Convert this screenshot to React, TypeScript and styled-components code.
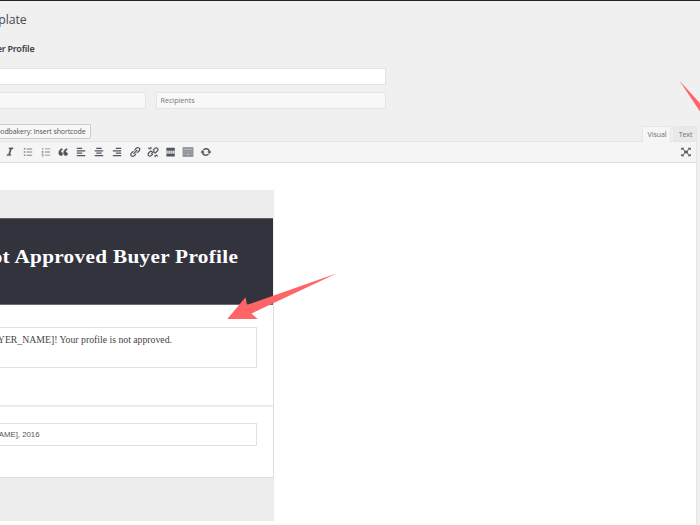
import React from "react";
import styled, { createGlobalStyle } from "styled-components";

const GlobalStyle = createGlobalStyle`
  * { box-sizing: border-box; }
  body { margin: 0; background: #f0f0f0; overflow: hidden; }
`;

const Page = styled.main`
  position: relative;
  width: 700px;
  height: 525px;
  overflow: hidden;
  background: #f0f0f0;
  font-family: "Open Sans", "Noto Sans", sans-serif;
  color: #444;
`;
const AdminBar = styled.div`
  height: 1px;
  background: #23222d;
`;
/* Right-anchored line whose start runs off the left edge. */
const Line = styled.div<{ $end: number }>`
  display: flex;
  justify-content: flex-end;
  align-items: center;
  width: ${(p) => p.$end}px;
  white-space: nowrap;
`;
const Title = styled(Line)`
  height: 37px;
  font: 400 12.3px "Open Sans", sans-serif;
  letter-spacing: -0.12px;
  color: #4a4b50;
`;
const Subtitle = styled(Line)`
  height: 30px;
  padding-bottom: 9px;
  font: 600 9px "Noto Sans", "Open Sans", sans-serif;
  letter-spacing: -0.22px;
  color: #3f3f45;
`;
const Fields = styled.div`
  display: grid;
  grid-template-columns: 146px 230px;
  grid-auto-rows: 17px;
  align-content: start;
  column-gap: 10px;
  row-gap: 7px;
  height: 56px;
`;
const Field = styled.div<{ $wide?: boolean }>`
  grid-column: ${(p) => (p.$wide ? "1 / -1" : "auto")};
  height: 17px;
  border: 1px solid ${(p) => (p.$wide ? "#e2e2e2" : "#e5e5e5")};
  border-left-width: ${(p) => (p.$wide ? 0 : 1)}px;
  background: ${(p) => (p.$wide ? "#fff" : "#f8f8f8")};
  padding-left: 3.5px;
  font-size: 7.2px;
  line-height: 15px;
  letter-spacing: -0.02px;
  color: #777;
  &:nth-child(2) { border-left: 0; }
`;
const Tools = styled.div`
  display: flex;
  justify-content: space-between;
  height: 18px;
  padding-right: 3px;
`;
const ShortcodeButton = styled(Line)`
  height: 15px;
  padding: 0 4px 1px 0;
  border: 1px solid #ccc;
  border-left: 0;
  border-radius: 0 2px 2px 0;
  background: #f7f7f7;
  font-size: 7.1px;
  letter-spacing: -0.15px;
  color: #555;
`;
const Tabs = styled.div`
  display: flex;
  gap: 2px;
  padding-top: 2px;
  height: 18px;
`;
const Tab = styled.div<{ $active?: boolean }>`
  width: ${(p) => (p.$active ? 29 : 24)}px;
  height: ${(p) => (p.$active ? 16 : 15)}px;
  padding-left: 1px;
  border: 1px solid #e6e6e6;
  border-bottom: 0;
  background: ${(p) => (p.$active ? "#f6f6f6" : "#e9e9e9")};
  text-align: center;
  font-size: 7.1px;
  line-height: 14px;
  letter-spacing: -0.12px;
  color: #707070;
`;
const Editor = styled.section`
  width: 697px;
  height: 384px;
  border-right: 1px solid #e5e5e5;
  background: #fff;
`;
const Toolbar = styled.div`
  display: flex;
  align-items: center;
  justify-content: space-between;
  height: 22px;
  margin-top: -1px;
  padding: 0 4px;
  border-top: 1px solid #e5e5e5;
  border-bottom: 1px solid #dedede;
  background: #f5f5f5;
`;
const IconGroup = styled.div`
  display: flex;
  gap: 5.84px;
`;
const Icon = styled.svg`
  display: block;
  width: 12px;
  height: 12px;
  fill: #50565f;
`;
const Email = styled.article`
  width: 274px;
  height: 331px;
  margin-top: 27px;
  padding-top: 28px;
  background: #ededed;
`;
const Banner = styled.header`
  width: 273px;
  height: 87px;
  padding-top: 26px;
  border-top: 1px solid #5d5f66;
  border-bottom: 1px solid #6b6a73;
  background: #33333e;
`;
const BannerText = styled(Line)`
  height: 24px;
  font: 700 19.2px "Liberation Serif", serif;
  letter-spacing: 0.29px;
  transform: scaleX(1.105);
  transform-origin: right center;
  color: #fff;
`;
const Card = styled.div`
  height: 173px;
  border-right: 1px solid #dedede;
  border-bottom: 1px solid #dedede;
  background: #fff;
`;
const CardPart = styled.div<{ $foot?: boolean }>`
  height: ${(p) => (p.$foot ? 71 : 102)}px;
  padding-top: ${(p) => (p.$foot ? 16 : 22)}px;
  border-bottom: ${(p) => (p.$foot ? 0 : 2)}px solid #ececec;
`;
const TextBox = styled.div<{ $foot?: boolean }>`
  width: 257px;
  height: ${(p) => (p.$foot ? 23 : 41)}px;
  padding-top: ${(p) => (p.$foot ? 3 : 4)}px;
  border: solid #e1e1e1;
  border-width: 1px 1px 1px 0;
`;
const Message = styled(Line)`
  height: 15px;
  font: 9.4px "Liberation Serif", serif;
  letter-spacing: 0px;
  transform: scaleX(1.04);
  transform-origin: right center;
  color: #444;
`;
const Copyright = styled(Line)`
  height: 15px;
  font: 7.8px "Liberation Sans", sans-serif;
  color: #555;
`;
const Arrows = styled.svg`
  position: absolute;
  inset: 0;
  fill: #ff6467;
  pointer-events: none;
`;

const icons: React.ReactNode[] = [
  <path d="M14.78 5h-2.13l-2.8 9h2.12l-.62 2H4.6l.62-2h2.14l2.8-9H8.03l.62-2h6.75z" stroke="#50565f" strokeWidth=".5" />,
  <path fill="#80858b" d="M3 3.5h2.5V6H3zM7.5 4h9.5v1.7H7.5zM3 8.7h2.5v2.5H3zM7.5 9.2h9.5v1.7H7.5zM3 14h2.5v2.5H3zM7.5 14.5h9.5v1.7H7.5z" />,
  <path fill="#80858b" d="M4 2.8h1.2v4H4zM3 8.5h2.5v1.3L4.2 11h1.5v1H3v-1.2l1.3-1.2H3zM3 13.5h2.6v4H3v-.8h1.6V16H3.4v-.8h1.2v-.8H3zM8 4h9v1.6H8zM8 9.2h9v1.6H8zM8 14.4h9v1.6H8z" />,
  <path d="M9.49 13.22c0-.74-.2-1.38-.61-1.9-.62-.78-1.83-.88-2.53-.72-.29-1.65 1.11-3.75 2.92-4.65L7.88 4c-2.73 1.3-5.42 4.28-4.96 8.05C3.21 14.43 4.59 16 6.54 16c.85 0 1.56-.25 2.12-.75s.83-1.18.83-2.03zm8.05 0c0-.74-.2-1.38-.61-1.9-.63-.78-1.83-.88-2.53-.72-.29-1.65 1.11-3.75 2.92-4.65L15.93 4c-2.73 1.3-5.41 4.28-4.95 8.05.29 2.38 1.66 3.95 3.61 3.95.85 0 1.56-.25 2.12-.75s.83-1.18.83-2.03z" stroke="#50565f" strokeWidth=".8" />,
  <path d="M3 3h9v2H3zM3 7h14v2H3zM3 11h9v2H3zM3 15h14v2H3z" />,
  <path d="M5.5 3h9v2h-9zM3 7h14v2H3zM5.5 11h9v2h-9zM3 15h14v2H3z" />,
  <path d="M8 3h9v2H8zM3 7h14v2H3zM8 11h9v2H8zM3 15h14v2H3z" />,
  <path d="M17.74 2.76c1.68 1.69 1.68 4.41 0 6.1l-1.53 1.52c-1.12 1.12-2.7 1.47-4.14 1.09l2.62-2.61.76-.77.76-.76c.84-.84.84-2.2 0-3.04-.84-.85-2.2-.85-3.04 0l-.77.76-3.38 3.38c-.37-1.44-.02-3.02 1.1-4.14l1.52-1.53c1.69-1.68 4.42-1.68 6.1 0zM8.59 13.43l5.34-5.34c.42-.42.42-1.1 0-1.52-.44-.43-1.13-.39-1.53 0l-5.33 5.34c-.42.42-.42 1.1 0 1.52.44.43 1.13.39 1.52 0zm-.76 2.29l4.14-4.15c.38 1.44.03 3.02-1.09 4.14l-1.52 1.53c-1.69 1.68-4.41 1.68-6.1 0-1.68-1.68-1.68-4.42 0-6.1l1.53-1.52c1.12-1.12 2.7-1.47 4.14-1.1l-4.14 4.15c-.85.84-.85 2.2 0 3.05.84.84 2.2.84 3.04 0z" />,
  <g fill="none" stroke="#50565f" strokeWidth="2">
    <path d="M10 7l3-3a3 3 0 0 1 4.3 4.3L14 11.5l-3-.3M10 13l-3 3a3 3 0 0 1-4.3-4.3L6 8.5l3 .3" />
    <path d="M2 3l3.5 2.5M6 1.5l1 3M18 17l-3.5-2.5M14 18.5l-1-3M7 13l5.5-5.5" />
  </g>,
  <path transform="translate(1 0)" d="M3 3h14v5H3zM3 9.3h2v1.7H3zM6 9.3h2v1.7H6zM9 9.3h2v1.7H9zM12 9.3h2v1.7h-2zM15 9.3h2v1.7h-2zM3 12.3h14v5H3z" />,
  <>
    <path d="M1 2h18v16H1z" fill="#868b91" />
    <path
      d="M2.5 5.5h15M2.5 14.5h2M7 14.5h6M15.5 14.5h2"
      stroke="#d5d8db"
      strokeWidth="1.3"
    />
    <path d="M2.5 8.7h15M2.5 11.6h15" stroke="#c3c7cb" strokeWidth="1.3" strokeDasharray="2 1.2" />
  </>,
  <path d="M10.2 3.28c3.53 0 6.43 2.61 6.92 6h2.08l-3.5 4-3.5-4h2.32c-.45-1.97-2.21-3.45-4.32-3.45-1.45 0-2.73.71-3.54 1.78L4.95 5.66C6.23 4.2 8.11 3.28 10.2 3.28zm-.4 13.44c-3.52 0-6.43-2.61-6.92-6H.8l3.5-4 3.5 4H5.48c.45 1.97 2.21 3.45 4.32 3.45 1.45 0 2.73-.71 3.54-1.78l1.71 1.95c-1.28 1.46-3.15 2.38-5.25 2.38z" />,
];

export default function App() {
  return (
    <Page>
      <GlobalStyle />
      <AdminBar />
      <Title $end={26.5}>plate</Title>
      <Subtitle $end={34.5}>er Profile</Subtitle>
      <Fields>
        <Field $wide />
        <Field />
        <Field>Recipients</Field>
      </Fields>
      <Tools>
        <ShortcodeButton $end={90.5}>oodbakery: Insert shortcode</ShortcodeButton>
        <Tabs>
          <Tab $active>Visual</Tab>
          <Tab>Text</Tab>
        </Tabs>
      </Tools>
      <Editor>
        <Toolbar>
          <IconGroup>
            {icons.map((icon, i) => (
              <Icon key={i} viewBox="0 0 20 20">{icon}</Icon>
            ))}
          </IconGroup>
          <Icon viewBox="0 0 20 20">
            <path d="M7 8h6v4H7zM2 3h5L5.6 4.4 8.5 7.3 7.3 8.5 4.4 5.6 2 7zM18 3h-5l1.4 1.4-2.9 2.9 1.2 1.2 2.9-2.9L18 7zM2 17h5l-1.4-1.4 2.9-2.9-1.2-1.2-2.9 2.9L2 13zM18 17h-5l1.4-1.4-2.9-2.9 1.2-1.2 2.9 2.9L18 13z" />
          </Icon>
        </Toolbar>
        <Email>
          <Banner>
            <BannerText $end={238.2}>ot Approved Buyer Profile</BannerText>
          </Banner>
          <Card>
            <CardPart>
              <TextBox>
                <Message $end={172}>YER_NAME]! Your profile is not approved.</Message>
              </TextBox>
            </CardPart>
            <CardPart $foot>
              <TextBox $foot>
                <Copyright $end={39.5}>AME], 2016</Copyright>
              </TextBox>
            </CardPart>
          </Card>
        </Email>
      </Editor>
      <Arrows width="700" height="525">
        <path d="M337 273.2 L247 305 L245.5 297.3 L227.3 319 H257.7 L251.5 313.5Z" />
        <path d="M679.3 80.5 L700 103.3 V111.5Z" />
      </Arrows>
    </Page>
  );
}
